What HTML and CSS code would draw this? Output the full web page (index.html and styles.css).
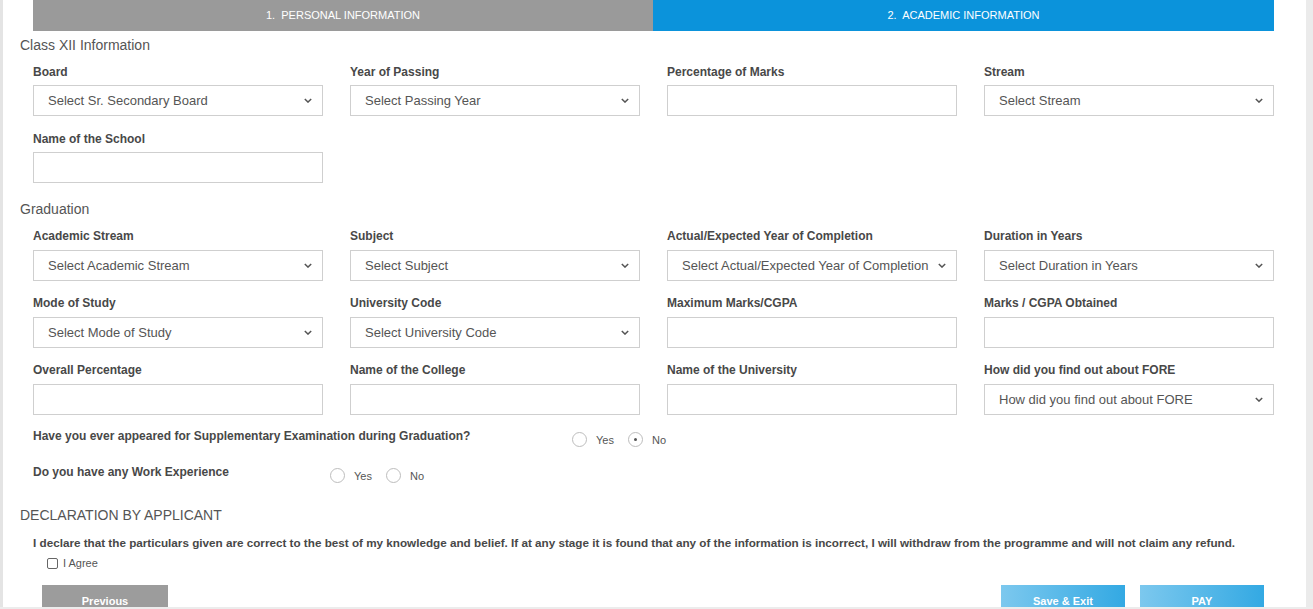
FILE: index.html
```html
<!DOCTYPE html>
<html lang="en">
<head>
<meta charset="utf-8">
<title>Academic Information</title>
<link rel="stylesheet" href="styles.css">
</head>
<body>
<div class="page">
  <div class="main">
    <div class="wrap">
      <div class="tabs">
        <div class="tab tab-done">1.&nbsp; PERSONAL INFORMATION</div>
        <div class="tab tab-active">2.&nbsp; ACADEMIC INFORMATION</div>
      </div>

      <h2 class="heading h-class">Class XII Information</h2>
      <div class="grid g-class">
        <div class="field">
          <label class="lbl">Board</label>
          <div class="sel"><span>Select Sr. Secondary Board</span><svg class="chev" viewBox="0 0 10 6"><path d="M1 1l4 4 4-4"/></svg></div>
        </div>
        <div class="field">
          <label class="lbl">Year of Passing</label>
          <div class="sel"><span>Select Passing Year</span><svg class="chev" viewBox="0 0 10 6"><path d="M1 1l4 4 4-4"/></svg></div>
        </div>
        <div class="field">
          <label class="lbl">Percentage of Marks</label>
          <div class="inp"></div>
        </div>
        <div class="field">
          <label class="lbl">Stream</label>
          <div class="sel"><span>Select Stream</span><svg class="chev" viewBox="0 0 10 6"><path d="M1 1l4 4 4-4"/></svg></div>
        </div>
        <div class="field">
          <label class="lbl">Name of the School</label>
          <div class="inp"></div>
        </div>
      </div>

      <h2 class="heading h-grad">Graduation</h2>
      <div class="grid g-grad">
        <div class="field">
          <label class="lbl">Academic Stream</label>
          <div class="sel"><span>Select Academic Stream</span><svg class="chev" viewBox="0 0 10 6"><path d="M1 1l4 4 4-4"/></svg></div>
        </div>
        <div class="field">
          <label class="lbl">Subject</label>
          <div class="sel"><span>Select Subject</span><svg class="chev" viewBox="0 0 10 6"><path d="M1 1l4 4 4-4"/></svg></div>
        </div>
        <div class="field">
          <label class="lbl">Actual/Expected Year of Completion</label>
          <div class="sel"><span>Select Actual/Expected Year of Completion</span><svg class="chev" viewBox="0 0 10 6"><path d="M1 1l4 4 4-4"/></svg></div>
        </div>
        <div class="field">
          <label class="lbl">Duration in Years</label>
          <div class="sel"><span>Select Duration in Years</span><svg class="chev" viewBox="0 0 10 6"><path d="M1 1l4 4 4-4"/></svg></div>
        </div>
        <div class="field">
          <label class="lbl">Mode of Study</label>
          <div class="sel"><span>Select Mode of Study</span><svg class="chev" viewBox="0 0 10 6"><path d="M1 1l4 4 4-4"/></svg></div>
        </div>
        <div class="field">
          <label class="lbl">University Code</label>
          <div class="sel"><span>Select University Code</span><svg class="chev" viewBox="0 0 10 6"><path d="M1 1l4 4 4-4"/></svg></div>
        </div>
        <div class="field">
          <label class="lbl">Maximum Marks/CGPA</label>
          <div class="inp"></div>
        </div>
        <div class="field">
          <label class="lbl">Marks / CGPA Obtained</label>
          <div class="inp"></div>
        </div>
        <div class="field">
          <label class="lbl">Overall Percentage</label>
          <div class="inp"></div>
        </div>
        <div class="field">
          <label class="lbl">Name of the College</label>
          <div class="inp"></div>
        </div>
        <div class="field">
          <label class="lbl">Name of the University</label>
          <div class="inp"></div>
        </div>
        <div class="field">
          <label class="lbl">How did you find out about FORE</label>
          <div class="sel"><span>How did you find out about FORE</span><svg class="chev" viewBox="0 0 10 6"><path d="M1 1l4 4 4-4"/></svg></div>
        </div>
      </div>

      <div class="qrow q1">
        <div class="qlbl q1-lbl">Have you ever appeared for Supplementary Examination during Graduation?</div>
        <div class="radios">
          <span class="radio"></span><span class="rtxt">Yes</span>
          <span class="radio checked"></span><span class="rtxt">No</span>
        </div>
      </div>
      <div class="qrow q2">
        <div class="qlbl q2-lbl">Do you have any Work Experience</div>
        <div class="radios">
          <span class="radio"></span><span class="rtxt">Yes</span>
          <span class="radio"></span><span class="rtxt">No</span>
        </div>
      </div>

      <h2 class="heading h-decl">DECLARATION BY APPLICANT</h2>
      <p class="decl">I declare that the particulars given are correct to the best of my knowledge and belief. If at any stage it is found that any of the information is incorrect, I will withdraw from the programme and will not claim any refund.</p>
      <div class="agree"><span class="cbox"></span><span class="agree-txt">I Agree</span></div>

      <div class="actions">
        <button class="btn btn-prev">Previous</button>
        <div class="actions-right">
          <button class="btn btn-blue">Save &amp; Exit</button>
          <button class="btn btn-blue">PAY</button>
        </div>
      </div>
    </div>
  </div>
  <div class="track"></div>
</div>
<div class="bottom-edge"></div>
</body>
</html>
```

FILE: styles.css
```css
html, body {
  margin: 0;
  padding: 0;
  height: 609px;
  overflow: hidden;
  background: #fff;
  font-family: "Liberation Sans", Arial, sans-serif;
}

.page {
  display: flex;
  height: 609px;
}

.main {
  flex: 1;
  border-left: 3px solid #e4e4e4;
  background: #fff;
}

.track {
  width: 7px;
  background: #ebebeb;
}

.wrap {
  width: 1241px;
  margin-left: 30px;
}

.tabs {
  display: grid;
  grid-template-columns: 620px 621px;
  height: 31px;
}

.tab {
  display: flex;
  align-items: center;
  justify-content: center;
  color: #fff;
  font-size: 11px;
  padding-bottom: 2px;
}

.tab-done { background: #9a9a9a; }
.tab-active { background: #0b93db; }

.heading {
  margin: 0 0 0 -13px;
  font-weight: normal;
  font-size: 14px;
  line-height: 16px;
  color: #555;
}

.h-class { margin-top: 6px; }
.h-grad { margin-top: 18px; }
.h-decl { margin-top: 24px; }

.grid {
  display: grid;
  grid-template-columns: repeat(4, 290px);
  column-gap: 27px;
  row-gap: 15px;
}

.g-class { margin-top: 11px; }
.g-grad { margin-top: 12px; }

.field {
  display: flex;
  flex-direction: column;
}

.lbl {
  font-size: 12px;
  font-weight: bold;
  color: #484848;
  line-height: 14px;
  height: 14px;
  margin-bottom: 7px;
}

.g-class .lbl {
  margin-top: 1px;
  margin-bottom: 6px;
}

.sel, .inp {
  box-sizing: border-box;
  height: 31px;
  border: 1px solid #cfcfcf;
  background: #fff;
}

.sel {
  display: flex;
  align-items: center;
  justify-content: space-between;
  padding: 0 10px 1px 14px;
  font-size: 13px;
  color: #555;
}

.chev {
  width: 8px;
  height: 5px;
  fill: none;
  stroke: #555;
  stroke-width: 1.8;
}

.qrow {
  display: flex;
  align-items: center;
  font-size: 12px;
}

.q1 { margin-top: 10px; }
.q2 { margin-top: 14px; }

.qlbl {
  font-weight: bold;
  color: #484848;
}

.q1-lbl { width: 539px; }
.q2-lbl { width: 297px; }

.radios {
  display: flex;
  align-items: center;
  padding-top: 7px;
}

.radio {
  box-sizing: border-box;
  width: 15px;
  height: 15px;
  border: 1px solid #bdbdbd;
  border-radius: 50%;
  display: flex;
  align-items: center;
  justify-content: center;
}

.radio.checked::after {
  content: "";
  width: 3px;
  height: 3px;
  border-radius: 50%;
  background: #555;
}

.rtxt {
  font-size: 11px;
  color: #555;
  margin: 0 14px 0 9px;
}

.decl {
  margin: 12px 0 0 0;
  font-size: 11.7px;
  font-weight: bold;
  color: #484848;
  line-height: 16px;
}

.agree {
  display: flex;
  align-items: center;
  margin: 6px 0 0 14px;
}

.cbox {
  box-sizing: border-box;
  width: 11px;
  height: 11px;
  border: 1px solid #666;
  border-radius: 2px;
}

.agree-txt {
  font-size: 11px;
  color: #555;
  margin-left: 5px;
}

.actions {
  display: flex;
  justify-content: space-between;
  margin: 16px 10px 0 9px;
}

.actions-right {
  display: flex;
  gap: 15px;
}

.btn {
  width: 126px;
  height: 32px;
  border: 0;
  padding: 0;
  font-family: "Liberation Sans", Arial, sans-serif;
  font-size: 11px;
  font-weight: bold;
  color: #fff;
}

.btn-blue { width: 124px; background: linear-gradient(to right, #7cc8ee, #33a9e3); }
.btn-prev { background: #9c9c9c; }

.bottom-edge {
  position: fixed;
  left: 0;
  right: 0;
  bottom: 0;
  height: 2px;
  background: #ececec;
}
```
